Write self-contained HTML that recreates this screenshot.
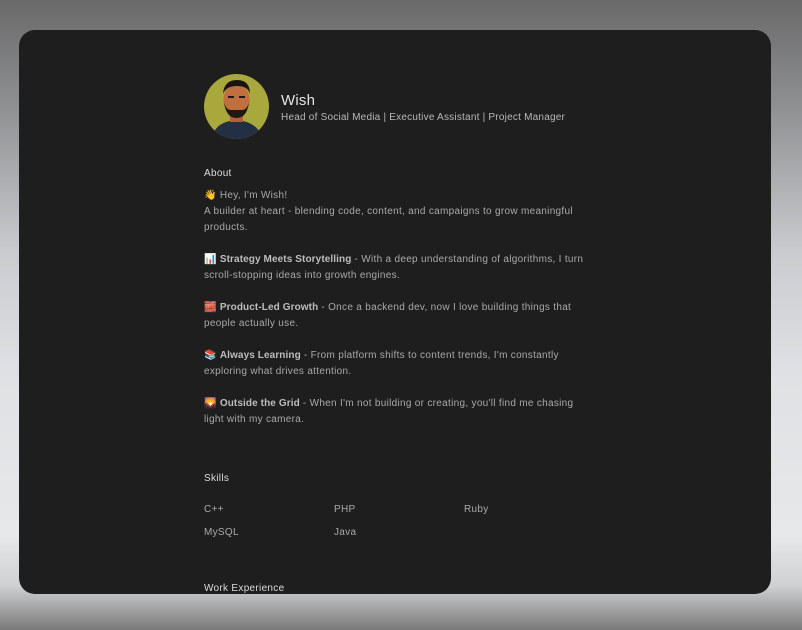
<!DOCTYPE html>
<html><head><meta charset="utf-8"><style>
html,body{margin:0;padding:0;width:802px;height:630px;overflow:hidden}
body{background:linear-gradient(to bottom,#6a6a6a 0%,#8a8b8d 15%,#c9cbce 40%,#dfe1e4 60%,#e6e8ea 85%,#cfd0d2 93%,#7a7a7a 100%);font-family:"Liberation Sans","Noto Sans CJK SC",sans-serif;position:relative}
.card{position:absolute;left:19px;top:30px;width:752px;height:564px;background:#1e1e1f;border-radius:16px;overflow:hidden}
.t{position:absolute;left:185px;font-size:10px;color:#a9a9a9;white-space:nowrap;line-height:12px;letter-spacing:0.3px}
.h{color:#dcdcdc;font-size:10px}
b{color:#bdbdbd;font-weight:bold;letter-spacing:0.1px}
.av{position:absolute;left:185px;top:44px;width:65px;height:65px;border-radius:50%;background:#a9a83c;overflow:hidden}
</style></head><body>
<div class="card">
<div class="av"><svg width="65" height="65" viewBox="0 0 65 65">
<path d="M8 65 Q10 48 32 46 Q55 48 58 65Z" fill="#233044"/>
<rect x="26" y="38" width="13" height="10" fill="#b0603a"/>
<ellipse cx="32.5" cy="26" rx="13" ry="16" fill="#c0703f"/>
<path d="M19 20 Q20 6 33 6 Q46 6 46 20 Q44 12 33 12 Q22 12 19 20Z" fill="#1a1410"/>
<path d="M20 28 Q22 44 32.5 44 Q43 44 45 28 Q43 36 38 36 L27 36 Q22 36 20 28Z" fill="#201812"/>
<rect x="24" y="22" width="6" height="2" fill="#201812"/><rect x="35" y="22" width="6" height="2" fill="#201812"/>
</svg></div>
<div class="t" style="left:262px;top:62px;font-size:15px;line-height:18px;color:#e4e4e4;letter-spacing:0.2px">Wish</div>
<div class="t" style="left:262px;top:82px;color:#b8b8b8;letter-spacing:0.22px">Head of Social Media | Executive Assistant | Project Manager</div>
<div class="t h" style="top:138px">About</div>
<div class="t" style="top:160px">👋 Hey, I'm Wish!</div>
<div class="t" style="top:176px">A builder at heart - blending code, content, and campaigns to grow meaningful</div>
<div class="t" style="top:192px">products.</div>
<div class="t" style="top:224px">📊 <b>Strategy Meets Storytelling</b> - With a deep understanding of algorithms, I turn</div>
<div class="t" style="top:240px">scroll-stopping ideas into growth engines.</div>
<div class="t" style="top:272px">🧱 <b>Product-Led Growth</b> - Once a backend dev, now I love building things that</div>
<div class="t" style="top:288px">people actually use.</div>
<div class="t" style="top:320px">📚 <b>Always Learning</b> - From platform shifts to content trends, I'm constantly</div>
<div class="t" style="top:336px">exploring what drives attention.</div>
<div class="t" style="top:368px">🌄 <b>Outside the Grid</b> - When I'm not building or creating, you'll find me chasing</div>
<div class="t" style="top:384px">light with my camera.</div>
<div class="t h" style="top:443px">Skills</div>
<div class="t" style="top:474px">C++</div>
<div class="t" style="top:474px;left:315px">PHP</div>
<div class="t" style="top:474px;left:445px">Ruby</div>
<div class="t" style="top:497px">MySQL</div>
<div class="t" style="top:497px;left:315px">Java</div>
<div class="t h" style="top:553px">Work Experience</div>
</div>
</body></html>
